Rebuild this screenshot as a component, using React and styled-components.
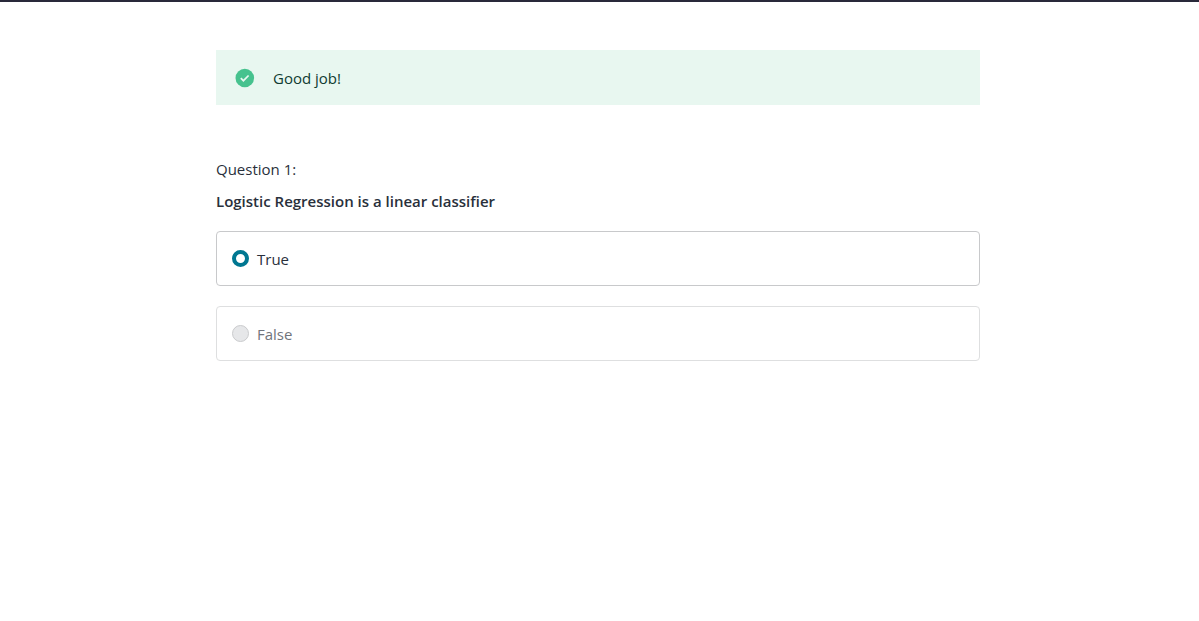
import React, { useState } from "react";
import styled, { createGlobalStyle } from "styled-components";

const GlobalStyle = createGlobalStyle`
  *, *::before, *::after { box-sizing: border-box; }
  body {
    margin: 0;
    background: #fff;
    color: #29303b;
    font: 400 15px/24px "Open Sans", "Noto Sans", sans-serif;
  }
`;

const Page = styled.div`
  border-top: 2px solid #29293a;
  padding: 48px 19px 48px 16px;
`;

const Quiz = styled.main`
  width: 100%;
  max-width: 764px;
  margin: 0 auto;
`;

const Feedback = styled.div`
  display: flex;
  align-items: center;
  gap: 18px;
  min-height: 55px;
  padding: 0 19px;
  background: #e8f7f0;
  color: #0f3c32;
`;

const Question = styled.form`
  margin-top: 52px;
`;

const QuestionNumber = styled.p`
  margin: 0;
`;

const Prompt = styled.h1`
  margin: 8px 0 18px;
  font-size: 15px;
  font-weight: 600;
  line-height: 24px;
`;

const Options = styled.div`
  display: grid;
  gap: 20px;
`;

const Option = styled.label`
  display: flex;
  align-items: center;
  gap: 8px;
  min-height: 55px;
  padding: 0 15px;
  border: 1px solid ${(p) => (p.$disabled ? "#dedfe0" : "#c8c9cb")};
  border-radius: 4px;
  color: ${(p) => (p.$disabled ? "#70747c" : "#29303b")};
`;

const Radio = styled.input`
  appearance: none;
  flex: none;
  width: 17px;
  height: 17px;
  margin: 0;
  border: 1px solid #cacbcd;
  border-radius: 50%;
  background: #fff;

  &:checked {
    border: 4px solid #007791;
  }

  &:disabled {
    background: #e6e7e9;
  }
`;

function SuccessIcon() {
  return (
    <svg width="20" height="20" viewBox="0 0 20 20" aria-hidden="true">
      <circle cx="9.8" cy="10" r="9.3" fill="#46c28e" />
      <path d="M5.8 10.2 8.4 12.7 13.6 7.5" fill="none" stroke="#e8f7f0" strokeWidth="1.7" />
    </svg>
  );
}

const choices = [
  { value: "True", disabled: false },
  { value: "False", disabled: true },
];

export default function App() {
  const [answer, setAnswer] = useState("True");

  return (
    <>
      <GlobalStyle />
      <Page>
        <Quiz>
          <Feedback role="status">
            <SuccessIcon />
            <span>Good job!</span>
          </Feedback>
          <Question>
            <QuestionNumber>Question 1:</QuestionNumber>
            <Prompt id="prompt">Logistic Regression is a linear classifier</Prompt>
            <Options role="radiogroup" aria-labelledby="prompt">
              {choices.map(({ value, disabled }) => (
                <Option key={value} $disabled={disabled}>
                  <Radio
                    type="radio"
                    name="answer"
                    value={value}
                    checked={answer === value}
                    disabled={disabled}
                    onChange={() => setAnswer(value)}
                  />
                  <span>{value}</span>
                </Option>
              ))}
            </Options>
          </Question>
        </Quiz>
      </Page>
    </>
  );
}
